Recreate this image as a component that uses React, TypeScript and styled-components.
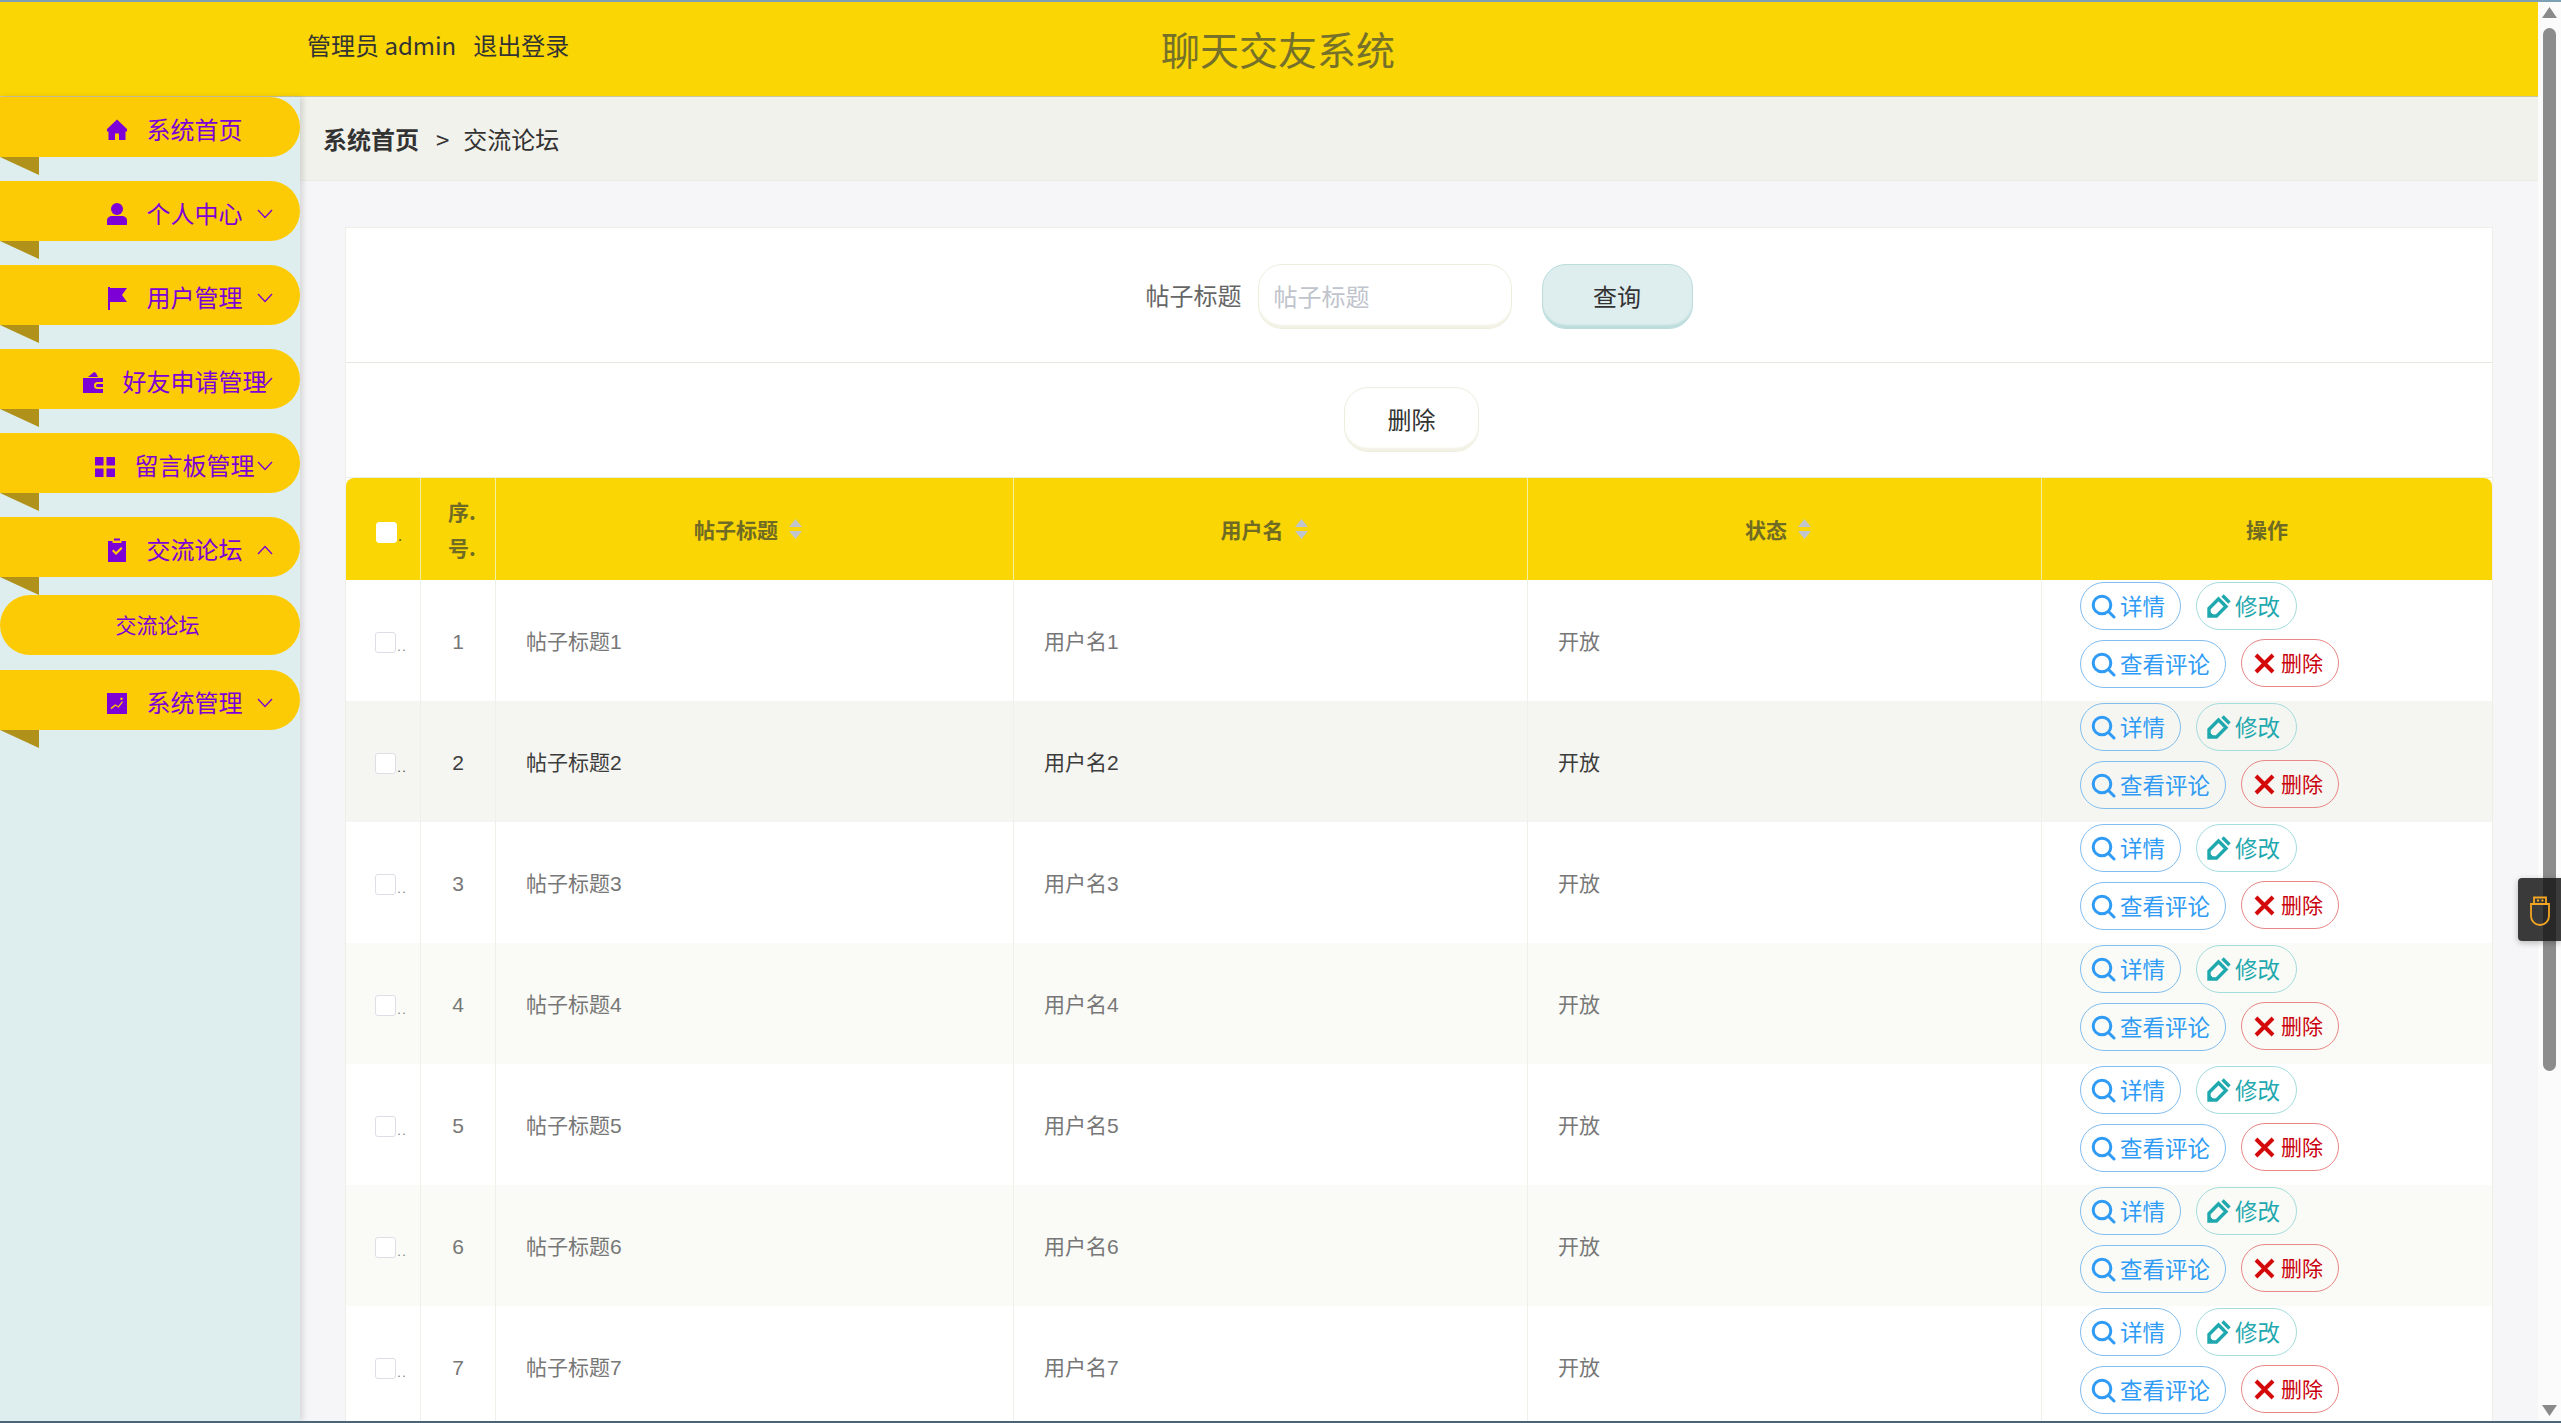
import React from "react";
import styled, { createGlobalStyle } from "styled-components";

const FONT = `"Noto Sans CJK SC", "Noto Sans", sans-serif`;
const PURPLE = "#7d00d6";

const Global = createGlobalStyle`
  html, body { margin: 0; padding: 0; height: 100%; overflow: hidden; }
  body { font-family: ${FONT}; color: #333; background: #fff; }
  * { box-sizing: border-box; }
`;

const Frame = styled.div`
  height: 100vh;
  display: flex;
  border-top: 2px solid #7f9fb3;
  border-bottom: 2px solid #4a6478;
`;

const Viewport = styled.div`
  flex: 1;
  min-width: 0;
  overflow: hidden;
  background: #f6f6f8;
`;

const ScrollRail = styled.div`
  flex: 0 0 23px;
  display: flex;
  flex-direction: column;
  padding: 5px 0;
  background: #fbfbfb;
`;

const RailArrow = styled.span<{ $down?: boolean }>`
  display: block;
  flex: 0 0 11px;
  width: 15px;
  margin-left: 4px;
  margin-top: ${(p) => (p.$down ? "auto" : "0")};
  background: #8a8a8a;
  clip-path: ${(p) => (p.$down ? "polygon(0 0, 100% 0, 50% 100%)" : "polygon(50% 0, 100% 100%, 0 100%)")};
`;

const RailThumb = styled.span`
  display: block;
  flex: 0 0 1043px;
  width: 13px;
  margin: 10px 0 0 5px;
  background: #8c8c8c;
  border-radius: 8px;
`;

const TopBar = styled.header`
  height: 95px;
  display: flex;
  align-items: flex-start;
  padding-left: 307px;
  background: #fad605;
  border-bottom: 1px solid #c9c6a0;
`;

const UserInfo = styled.div`
  font-size: 24px;
  line-height: 32px;
  margin-top: 27px;
  color: #333;
  white-space: nowrap;
  width: 262px;
`;

const Logout = styled.span`
  margin-left: 17px;
`;

const SiteTitle = styled.h1`
  margin: 25px 0 0 592px;
  font-size: 39px;
  line-height: 42px;
  font-weight: 400;
  color: #75712a;
`;

const Body = styled.div`
  display: flex;
  align-items: stretch;
  height: 1324px;
`;

const Sidebar = styled.nav`
  position: relative;
  z-index: 2;
  flex: 0 0 300px;
  background: #deeeee;
  box-shadow: 3px 0 6px rgba(0, 0, 0, 0.13);
`;

const MenuItem = styled.div`
  position: relative;
  height: 60px;
  margin-bottom: 24px;
  padding: 6px 0 0 48px;
  display: flex;
  align-items: center;
  justify-content: center;
  gap: 19px;
  background: #fdcb05;
  border-radius: 0 30px 30px 0;
  color: ${PURPLE};
  font-size: 24px;
  white-space: nowrap;
  &::after {
    content: "";
    position: absolute;
    left: 0;
    top: 60px;
    width: 39px;
    height: 18px;
    background: #b0911a;
    clip-path: polygon(0 0, 100% 0, 100% 100%);
  }
`;

const MenuLabel = styled.span`
  margin-bottom: 4px;
`;

const SubItem = styled.div`
  height: 60px;
  margin: -6px 0 15px;
  padding: 0 0 2px 15px;
  display: flex;
  align-items: center;
  justify-content: center;
  background: #fdcb05;
  border-radius: 30px;
  color: ${PURPLE};
  font-size: 21px;
`;

const Chevron = styled.svg`
  position: absolute;
  left: 257px;
  top: 28px;
  width: 16px;
  height: 10px;
  fill: none;
  stroke: ${PURPLE};
  stroke-width: 1.3;
`;

const MenuGlyph = styled.svg`
  flex: 0 0 22px;
  width: 22px;
  height: 24px;
  fill: ${PURPLE};
  display: block;
`;

const Main = styled.main`
  flex: 1;
  min-width: 0;
`;

const Breadcrumb = styled.div`
  height: 84px;
  padding: 0 0 0 23px;
  display: flex;
  align-items: center;
  background: #f2f2ec;
  border-bottom: 1px solid #ebebe6;
  font-size: 24px;
  color: #333;
`;

const CrumbRoot = styled.b`
  font-weight: 700;
`;

const CrumbSep = styled.span`
  margin: 0 14px 0 17px;
`;

const Content = styled.div`
  padding: 47px 46px 0;
`;

const Card = styled.section`
  background: #fff;
  box-shadow: 0 0 0 1px #efefe8;
`;

const SearchRow = styled.form`
  height: 135px;
  padding-top: 36px;
  display: flex;
  justify-content: center;
  border-bottom: 1px solid #e8e8e0;
`;

const FieldLabel = styled.label`
  font-size: 24px;
  line-height: 62px;
  color: #666;
  margin-right: 16px;
`;

const SearchInput = styled.input`
  width: 254px;
  height: 65px;
  padding: 0 15px 3px;
  font-family: ${FONT};
  font-size: 24px;
  color: #333;
  background: #fff;
  border: 1px solid #eeeede;
  border-radius: 24px;
  outline: none;
  box-shadow: inset 0 -4px 2px -1px #f1f1e4;
  &::placeholder { color: #c0c4cc; }
`;

const PillButton = styled.button<{ $tone: "mint" | "white"; $w: number }>`
  width: ${(p) => p.$w}px;
  height: 65px;
  padding: 0 0 3px;
  font-family: ${FONT};
  font-size: 24px;
  color: #333;
  border-radius: 24px;
  border: 1px solid ${(p) => (p.$tone === "mint" ? "#bcdcdc" : "#eeeede")};
  background: ${(p) => (p.$tone === "mint" ? "#deeeee" : "#fff")};
  box-shadow: inset 0 -4px 2px -1px ${(p) => (p.$tone === "mint" ? "#bcdcdc" : "#f1f1e4")};
`;

const QueryButton = styled(PillButton)`
  margin-left: 30px;
`;

const ActionRow = styled.div`
  height: 114px;
  padding: 24px 15px 0 0;
  display: flex;
  justify-content: center;
`;

const Table = styled.table`
  width: 100%;
  table-layout: fixed;
  border-collapse: separate;
  border-spacing: 0;
  border-top: 1px solid #e6efe9;
`;

const HeadCell = styled.th<{ $sort?: boolean; $pushRight?: boolean }>`
  height: 102px;
  padding: 0 ${(p) => (p.$sort ? "13px" : "0")} 0 ${(p) => (p.$pushRight ? "8px" : "0")};
  background: #fad605;
  border-right: 1px solid #f6efa0;
  color: #706b24;
  font-size: 21px;
  line-height: 36px;
  font-weight: 700;
  text-align: center;
  vertical-align: middle;
  &:first-child { border-top-left-radius: 8px; }
  &:last-child { border-top-right-radius: 8px; border-right: 0; }
`;

const HeadInner = styled.span`
  display: inline-flex;
  align-items: center;
  gap: 11px;
`;

const SortCaret = styled.svg`
  width: 13px;
  height: 20px;
  fill: #c0c4cc;
`;

const CheckWrap = styled.span<{ $row?: boolean }>`
  display: inline-flex;
  align-items: flex-end;
  vertical-align: middle;
  margin-left: ${(p) => (p.$row ? "17px" : "14px")};
  line-height: 14px;
`;

const CheckBox = styled.span<{ $head?: boolean }>`
  display: block;
  width: 21px;
  height: 21px;
  background: #fff;
  border: 1px solid ${(p) => (p.$head ? "#fff" : "#dcdfe6")};
  border-radius: 3px;
`;

const CheckDots = styled.span`
  font-size: 11px;
  letter-spacing: 2px;
  margin-left: 1px;
`;

const Row = styled.tr<{ $look: "plain" | "hover" | "stripe" }>`
  background: ${(p) => (p.$look === "hover" ? "#f5f6f1" : p.$look === "stripe" ? "#fafbf6" : "#fff")};
  color: ${(p) => (p.$look === "hover" ? "#3c3c3c" : "#777")};
`;

const Cell = styled.td<{ $center?: boolean }>`
  height: 121px;
  padding: 0 ${(p) => (p.$center ? "0" : "30px")} 2px;
  font-size: 21px;
  text-align: ${(p) => (p.$center ? "center" : "left")};
  vertical-align: middle;
  border-right: 1px solid #eef0ea;
  &:last-child { border-right: 0; }
`;

const NumberText = styled.span`
  font-family: "Liberation Sans", sans-serif;
`;

const ActionCell = styled.td`
  padding: 2px 0 0 38px;
  vertical-align: top;
`;

const ActionWrap = styled.div`
  width: 340px;
  display: flex;
  flex-wrap: wrap;
  column-gap: 15px;
  row-gap: 10px;
`;

const TONES = {
  blue: { text: "#2f9bf5", line: "#82bdef" },
  teal: { text: "#1fa8ae", line: "#a5dcdc" },
  red: { text: "#c9000c", line: "#e98686" },
};

const RowButton = styled.span<{ $tone: keyof typeof TONES; $w: number; $small?: boolean }>`
  width: ${(p) => p.$w}px;
  height: 48px;
  display: inline-flex;
  align-items: center;
  gap: ${(p) => (p.$small ? "6px" : "4px")};
  padding-left: ${(p) => (p.$small ? "12px" : "10px")};
  border: 1px solid ${(p) => TONES[p.$tone].line};
  border-radius: 24px;
  color: ${(p) => TONES[p.$tone].text};
  font-size: ${(p) => (p.$small ? "21px" : "22.5px")};
  white-space: nowrap;
  margin-top: ${(p) => (p.$small ? "-1px" : "0")};
`;

const BtnLabel = styled.span`
  margin-bottom: 3px;
`;

const BtnIcon = styled.svg<{ $size: number }>`
  flex: 0 0 ${(p) => p.$size}px;
  width: ${(p) => p.$size}px;
  height: ${(p) => p.$size}px;
  fill: none;
  stroke: currentColor;
`;

const Floating = styled.div`
  position: fixed;
  right: 0;
  top: 878px;
  width: 43px;
  height: 63px;
  display: flex;
  align-items: center;
  padding-left: 11px;
  background: rgba(22, 22, 22, 0.84);
  border-radius: 4px 0 0 4px;
  box-shadow: 0 2px 6px rgba(0, 0, 0, 0.25);
`;

const UsbIcon = styled.svg`
  width: 22px;
  height: 34px;
  fill: none;
  stroke: #f5a623;
  stroke-width: 1.8;
`;

const icons: Record<string, React.ReactNode> = {
  home: <path d="M11 1.5 1 11v2.500h1.500V22H9v-6.500h4V22h6.500v-8.500H21V11z" />,
  user: (
    <>
      <circle cx="11" cy="7" r="6" />
      <path d="M1 23v-4.500C1 15.500 3.500 14 6 14h10c2.500 0 5 1.500 5 4.500V23z" />
    </>
  ),
  flag: <path d="M2 1h2v1h17l-5 7 5 7H4v8H2z" />,
  wallet: (
    <>
      <path d="M6 7 12 2l2 1 2 4z" />
      <path fillRule="evenodd" d="M1 8h20v4h-5.500a3.500 3.500 0 0 0 0 7H21v4H1zM15.500 14a1.500 1.500 0 1 0 0 3h5.500v-3z" />
    </>
  ),
  grid: (
    <>
      <rect x="1" y="3" width="8.500" height="8.500" />
      <rect x="12.500" y="3" width="8.500" height="8.500" />
      <rect x="1" y="14.500" width="8.500" height="8.500" />
      <rect x="12.500" y="14.500" width="8.500" height="8.500" />
    </>
  ),
  claim: (
    <>
      <rect x="8" y="0.500" width="6" height="2" />
      <path fillRule="evenodd" d="M2 3h4.500v2h9V3H20v21H2zM6 13l1.500-1.500 2.500 2.500 5-5L16.500 10.500 10 17z" />
    </>
  ),
  chart: <path fillRule="evenodd" d="M1 2h20v21H1zM4.500 17l1 1.200 4-3.400 3 2L17 11l-1-.8-3.800 5-3-2zM15.500 6.500a1.200 1.200 0 1 0 0 2.400 1.200 1.200 0 0 0 0-2.400z" />,
};

function Glyph({ name }: { name: string }) {
  return <MenuGlyph viewBox="0 0 22 24">{icons[name]}</MenuGlyph>;
}

function Caret({ open }: { open?: boolean }) {
  return (
    <Chevron viewBox="0 0 16 10">
      <polyline points={open ? "1,9 8,1.500 15,9" : "1,1 8,8.500 15,1"} />
    </Chevron>
  );
}

function Search() {
  return (
    <BtnIcon $size={25} viewBox="0 0 25 25" strokeWidth={3}>
      <circle cx="11" cy="11" r="8.800" />
      <path d="M17.500 17.500 23 23" strokeLinecap="round" />
    </BtnIcon>
  );
}

function Edit() {
  return (
    <BtnIcon $size={24} viewBox="0 0 24 24" strokeWidth={3.400}>
      <path d="M2 22v-7.500L11.500 5 19 12.500 9.500 22z" />
      <path d="M15.500 1.500 22.500 8.500" />
      <path d="M2 22v-5l5 5z" fill="currentColor" strokeWidth={1} />
    </BtnIcon>
  );
}

function Cross() {
  return (
    <BtnIcon $size={21} viewBox="0 0 21 21" strokeWidth={4}>
      <path d="M2 2 19 19M19 2 2 19" stroke="#d40a0a" />
    </BtnIcon>
  );
}

function Sort() {
  return (
    <SortCaret viewBox="0 0 13 20">
      <path d="M6.500 0 13 8H0z" />
      <path d="M0 12h13l-6.500 8z" />
    </SortCaret>
  );
}

const menu = [
  { icon: "home", label: "系统首页", arrow: "none" },
  { icon: "user", label: "个人中心", arrow: "down" },
  { icon: "flag", label: "用户管理", arrow: "down" },
  { icon: "wallet", label: "好友申请管理", arrow: "down" },
  { icon: "grid", label: "留言板管理", arrow: "down" },
  { icon: "claim", label: "交流论坛", arrow: "up", sub: "交流论坛" },
  { icon: "chart", label: "系统管理", arrow: "down" },
];

const rows = [1, 2, 3, 4, 5, 6, 7];

export default function App() {
  return (
    <Frame>
      <Global />
      <Viewport>
        <TopBar>
          <UserInfo>
            管理员 admin<Logout>退出登录</Logout>
          </UserInfo>
          <SiteTitle>聊天交友系统</SiteTitle>
        </TopBar>
        <Body>
          <Sidebar>
            {menu.map((m) => (
              <React.Fragment key={m.label}>
                <MenuItem>
                  <Glyph name={m.icon} />
                  <MenuLabel>{m.label}</MenuLabel>
                  {m.arrow !== "none" && <Caret open={m.arrow === "up"} />}
                </MenuItem>
                {m.sub && <SubItem>{m.sub}</SubItem>}
              </React.Fragment>
            ))}
          </Sidebar>
          <Main>
            <Breadcrumb>
              <CrumbRoot>系统首页</CrumbRoot>
              <CrumbSep>&gt;</CrumbSep>
              <span>交流论坛</span>
            </Breadcrumb>
            <Content>
              <Card>
                <SearchRow>
                  <FieldLabel>帖子标题</FieldLabel>
                  <SearchInput placeholder="帖子标题" />
                  <QueryButton type="button" $tone="mint" $w={151}>
                    查询
                  </QueryButton>
                </SearchRow>
                <ActionRow>
                  <PillButton type="button" $tone="white" $w={135}>
                    删除
                  </PillButton>
                </ActionRow>
                <Table>
                  <colgroup>
                    <col width="75" />
                    <col width="75" />
                    <col width="518" />
                    <col width="514" />
                    <col width="514" />
                    <col width="450" />
                  </colgroup>
                  <thead>
                    <tr>
                      <HeadCell>
                        <CheckWrap>
                          <CheckBox $head />
                          <CheckDots>.</CheckDots>
                        </CheckWrap>
                      </HeadCell>
                      <HeadCell $pushRight>
                        序.
                        <br />
                        号.
                      </HeadCell>
                      <HeadCell $sort>
                        <HeadInner>
                          帖子标题
                          <Sort />
                        </HeadInner>
                      </HeadCell>
                      <HeadCell $sort>
                        <HeadInner>
                          用户名
                          <Sort />
                        </HeadInner>
                      </HeadCell>
                      <HeadCell $sort>
                        <HeadInner>
                          状态
                          <Sort />
                        </HeadInner>
                      </HeadCell>
                      <HeadCell>操作</HeadCell>
                    </tr>
                  </thead>
                  <tbody>
                    {rows.map((n) => (
                      <Row key={n} $look={n === 2 ? "hover" : n % 2 === 0 ? "stripe" : "plain"}>
                        <Cell $center>
                          <CheckWrap $row>
                            <CheckBox />
                            <CheckDots>..</CheckDots>
                          </CheckWrap>
                        </Cell>
                        <Cell $center>
                          <NumberText>{n}</NumberText>
                        </Cell>
                        <Cell>
                          帖子标题<NumberText>{n}</NumberText>
                        </Cell>
                        <Cell>
                          用户名<NumberText>{n}</NumberText>
                        </Cell>
                        <Cell>开放</Cell>
                        <ActionCell>
                          <ActionWrap>
                            <RowButton $tone="blue" $w={101}>
                              <Search />
                              <BtnLabel>详情</BtnLabel>
                            </RowButton>
                            <RowButton $tone="teal" $w={101}>
                              <Edit />
                              <BtnLabel>修改</BtnLabel>
                            </RowButton>
                            <RowButton $tone="blue" $w={146}>
                              <Search />
                              <BtnLabel>查看评论</BtnLabel>
                            </RowButton>
                            <RowButton $tone="red" $w={98} $small>
                              <Cross />
                              <BtnLabel>删除</BtnLabel>
                            </RowButton>
                          </ActionWrap>
                        </ActionCell>
                      </Row>
                    ))}
                  </tbody>
                </Table>
              </Card>
            </Content>
          </Main>
        </Body>
      </Viewport>
      <ScrollRail>
        <RailArrow />
        <RailThumb />
        <RailArrow $down />
      </ScrollRail>
      <Floating>
        <UsbIcon viewBox="0 0 22 34">
          <path d="M2 11v12a9 9 0 0 0 18 0V11z" />
          <path d="M5 11V4.500h12V11" />
          <path d="M8 7.500h2M12.500 7.500h2" />
        </UsbIcon>
      </Floating>
    </Frame>
  );
}
